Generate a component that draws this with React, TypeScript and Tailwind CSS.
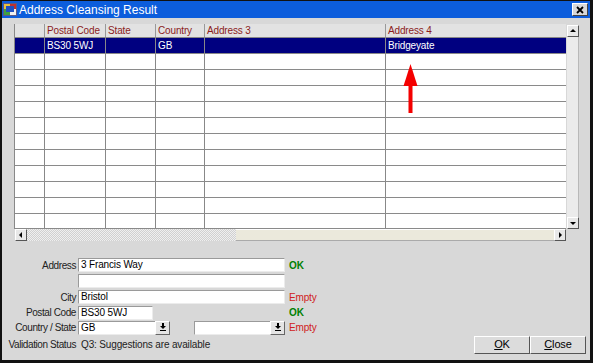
import React from "react";

const cols = [
  { key: "rh", label: "", w: "w-[30px]" },
  { key: "pc", label: "Postal Code", w: "w-[61px]" },
  { key: "st", label: "State", w: "w-[50px]" },
  { key: "co", label: "Country", w: "w-[49px]" },
  { key: "a3", label: "Address 3", w: "w-[181px]" },
  { key: "a4", label: "Address 4", w: "w-[181px]" },
];

const rows: Record<string, string>[] = [
  { pc: "BS30 5WJ", co: "GB", a4: "Bridgeyate" },
  ...Array.from({ length: 11 }, () => ({})),
];

const ArrowBtn = ({ dir }: { dir: "up" | "down" | "left" | "right" }) => {
  const pts = {
    up: "2,6 8,6 5,3",
    down: "2,4 8,4 5,7",
    left: "6,2 6,8 3,5",
    right: "4,2 4,8 7,5",
  }[dir];
  return (
    <div className="w-[12px] h-[12px] shrink-0 bg-[#e8e8e8] border-t border-l border-white border-r border-b border-r-[#555] border-b-[#555] flex items-center justify-center">
      <svg width="10" height="10" viewBox="0 0 10 10">
        <polygon points={pts} fill="#000" />
      </svg>
    </div>
  );
};

const Input = ({ value = "", w }: { value?: string; w: string }) => (
  <div
    className={`${w} h-[14px] shrink-0 bg-white border-t border-l border-[#9a9a9a] border-r border-b border-r-[#ececec] border-b-[#ececec] px-[2px] leading-[12px] text-black overflow-hidden whitespace-nowrap`}
  >
    {value}
  </div>
);

const Select = ({ value = "", w }: { value?: string; w: string }) => (
  <div className={`${w} h-[14px] shrink-0 flex`}>
    <div className="flex-1 bg-white border-t border-l border-[#9a9a9a] border-b border-b-[#ececec] px-[2px] leading-[12px] overflow-hidden">
      {value}
    </div>
    <div className="w-[15px] h-[14px] bg-[#e4e4e4] border-t border-l border-white border-r border-b border-r-[#666] border-b-[#666] flex items-center justify-center">
      <svg width="8" height="9" viewBox="0 0 8 9">
        <polygon points="1,3 7,3 4,6" fill="#000" />
        <rect x="1" y="7" width="6" height="1" fill="#000" />
        <rect x="3" y="0" width="2" height="3" fill="#000" />
      </svg>
    </div>
  </div>
);

const Label = ({ children }: { children?: React.ReactNode }) => (
  <div className="w-[76px] shrink-0 flex justify-end pr-[2px] whitespace-nowrap text-[#222] tracking-[-0.4px]">
    {children}
  </div>
);

export default function App() {
  return (
    <div
      className="w-[593px] h-[363px] bg-[#d8d8d8] border-l-2 border-r-[3px] border-b-[3px] border-t border-[#111] flex flex-col text-[10px] text-black tracking-[-0.15px]"
      style={{ fontFamily: '"Liberation Sans", Arial, sans-serif' }}
    >
      {/* title bar */}
      <div className="h-[17px] bg-[#0c5ddc] flex items-center pl-[1px] pr-[2px] shrink-0">
        <svg width="14" height="13" viewBox="0 0 14 13" className="mr-[2px]">
          <rect x="0" y="0" width="14" height="13" fill="#5a5a8a" />
          <rect x="1" y="1" width="6" height="5" fill="#e8c040" />
          <rect x="7" y="1" width="6" height="5" fill="#c03030" />
          <rect x="1" y="6" width="6" height="6" fill="#40a040" />
          <rect x="7" y="6" width="6" height="6" fill="#f0f0f0" />
          <rect x="3" y="3" width="8" height="6" fill="#2050c0" />
        </svg>
        <span className="text-white text-[12px] leading-none tracking-normal">Address Cleansing Result</span>
        <div className="ml-auto w-[16px] h-[13px] bg-[#d8d8d8] border-t border-l border-white border-r border-b border-r-[#444] border-b-[#444] flex items-center justify-center">
          <svg width="8" height="8" viewBox="0 0 8 8">
            <path d="M1 1 L7 7 M7 1 L1 7" stroke="#000" strokeWidth="1.8" />
          </svg>
        </div>
      </div>

      {/* grid */}
      <div className="mt-[6px] ml-[12px] w-[567px] h-[217px] flex flex-col relative shrink-0">
        <div className="flex h-[205px]">
          <div className="w-[552px] flex flex-col bg-white border-l border-[#888]">
            <div className="flex h-[14px] bg-[#e2e2e2] border-b border-[#888]">
              {cols.map((c) => (
                <div
                  key={c.key}
                  className={`${c.w} shrink-0 border-r border-[#999] text-[#8b1c1c] pl-[2px] leading-[13px] whitespace-nowrap overflow-hidden`}
                >
                  {c.label}
                </div>
              ))}
            </div>
            {rows.map((r, i) => (
              <div
                key={i}
                className={`flex ${i === rows.length - 1 ? "h-[15px]" : "h-[16px]"} border-b border-[#8a8a8a] ${
                  i === 0 ? "bg-[#000080] text-white" : "bg-white"
                }`}
              >
                {cols.map((c) => (
                  <div
                    key={c.key}
                    className={`${c.w} shrink-0 border-r border-[#888] pl-[2px] leading-[15px] whitespace-nowrap overflow-hidden`}
                  >
                    {r[c.key] ?? ""}
                  </div>
                ))}
              </div>
            ))}
          </div>
          {/* vertical scrollbar */}
          <div className="w-[15px] flex flex-col items-start pl-[1px] pt-[1px] bg-[#d8d8d8]">
            <ArrowBtn dir="up" />
            <div className="w-[12px] flex-1 bg-[#ebebeb] border-r border-[#b8b8b8]" />
            <ArrowBtn dir="down" />
          </div>
        </div>
        {/* horizontal scrollbar */}
        <div className="flex h-[12px]">
          <div className="w-[552px] flex pl-[1px]">
            <ArrowBtn dir="left" />
            <div
              className="w-[209px] h-[12px]"
              style={{
                backgroundColor: "#e6e6e6",
                backgroundImage:
                  "repeating-conic-gradient(#d0d0d0 0% 25%, #efefef 0% 50%)",
                backgroundSize: "2px 2px",
              }}
            />
            <div className="flex-1 h-[12px] bg-[#ebe9dc] border-t border-white border-b border-b-[#aaa]" />
            <ArrowBtn dir="right" />
          </div>
        </div>

        {/* annotation arrow */}
        <svg
          className="absolute left-[389px] top-[40px]"
          width="15"
          height="49"
          viewBox="0 0 15 49"
        >
          <polygon points="7.5,0 14.5,22 0.5,22" fill="#f40000" />
          <rect x="5.5" y="21" width="4" height="28" fill="#f40000" />
        </svg>
      </div>

      {/* form */}
      <div className="mt-[16px] flex flex-col">
        <div className="flex items-center h-[16px]">
          <Label>Address</Label>
          <Input w="w-[207px]" value="3 Francis Way" />
          <span className="ml-[4px] text-[#008000] font-bold">OK</span>
        </div>
        <div className="flex items-center h-[16px]">
          <Label />
          <Input w="w-[207px]" />
        </div>
        <div className="flex items-center h-[16px]">
          <Label>City</Label>
          <Input w="w-[207px]" value="Bristol" />
          <span className="ml-[4px] text-[#d02020]">Empty</span>
        </div>
        <div className="flex items-center h-[15px]">
          <Label>Postal Code</Label>
          <Input w="w-[75px]" value="BS30 5WJ" />
          <span className="ml-[136px] text-[#008000] font-bold">OK</span>
        </div>
        <div className="flex items-center h-[15px]">
          <Label>Country / State</Label>
          <Select w="w-[92px]" value="GB" />
          <div className="w-[24px] shrink-0" />
          <Select w="w-[91px]" />
          <span className="ml-[4px] text-[#d02020]">Empty</span>
        </div>
        <div className="flex items-center h-[19px]">
          <Label>Validation Status</Label>
          <span className="ml-[3px] text-[#222]">Q3: Suggestions are available</span>
          <div className="ml-auto mr-[4px] flex">
            <button className="w-[56px] h-[18px] bg-[#dcdcdc] border-t border-l border-white border-r border-b border-r-[#555] border-b-[#555] text-[11px] leading-none">
              <span className="underline">O</span>K
            </button>
            <button className="w-[56px] h-[18px] bg-[#dcdcdc] border-t border-l border-white border-r border-b border-r-[#555] border-b-[#555] text-[11px] leading-none">
              <span className="underline">C</span>lose
            </button>
          </div>
        </div>
      </div>
    </div>
  );
}
